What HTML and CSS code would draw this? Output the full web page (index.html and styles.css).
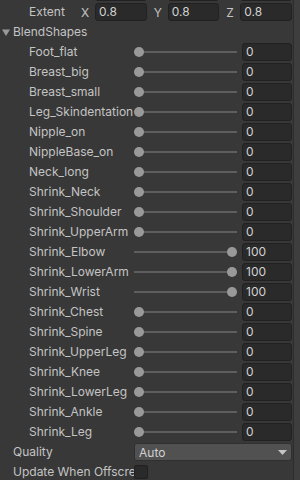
FILE: index.html
```html
<!DOCTYPE html>
<html>
<head>
<meta charset="utf-8">
<link rel="stylesheet" href="styles.css">
</head>
<body>
<div class="inspector">
  <div class="content">
    <div class="row vec indent first">
      <div class="label"></div>
      <div class="group"><span class="sub"></span><div class="field"></div></div>
      <div class="group"><span class="sub"></span><div class="field"></div></div>
      <div class="group"><span class="sub"></span><div class="field"></div></div>
    </div>
    <div class="row vec indent">
      <div class="label">Extent</div>
      <div class="group"><span class="sub">X</span><div class="field">0.8</div></div>
      <div class="group"><span class="sub">Y</span><div class="field">0.8</div></div>
      <div class="group"><span class="sub">Z</span><div class="field">0.8</div></div>
    </div>
    <div class="row fold">
      <div class="label"><svg class="tri" width="8" height="7" viewBox="0 0 8 7"><path d="M0 0.5 H8 L4 7 Z" fill="#999"/></svg>BlendShapes</div>
    </div>
    <div class="row indent"><div class="label">Foot_flat</div><div class="slider"><span class="knob"></span></div><div class="field num">0</div></div>
    <div class="row indent"><div class="label">Breast_big</div><div class="slider"><span class="knob"></span></div><div class="field num">0</div></div>
    <div class="row indent"><div class="label">Breast_small</div><div class="slider"><span class="knob"></span></div><div class="field num">0</div></div>
    <div class="row indent"><div class="label">Leg_Skindentation</div><div class="slider"><span class="knob"></span></div><div class="field num">0</div></div>
    <div class="row indent"><div class="label">Nipple_on</div><div class="slider"><span class="knob"></span></div><div class="field num">0</div></div>
    <div class="row indent"><div class="label">NippleBase_on</div><div class="slider"><span class="knob"></span></div><div class="field num">0</div></div>
    <div class="row indent"><div class="label">Neck_long</div><div class="slider"><span class="knob"></span></div><div class="field num">0</div></div>
    <div class="row indent"><div class="label">Shrink_Neck</div><div class="slider"><span class="knob"></span></div><div class="field num">0</div></div>
    <div class="row indent"><div class="label">Shrink_Shoulder</div><div class="slider"><span class="knob"></span></div><div class="field num">0</div></div>
    <div class="row indent"><div class="label">Shrink_UpperArm</div><div class="slider"><span class="knob"></span></div><div class="field num">0</div></div>
    <div class="row indent"><div class="label">Shrink_Elbow</div><div class="slider max"><span class="knob"></span></div><div class="field num">100</div></div>
    <div class="row indent"><div class="label">Shrink_LowerArm</div><div class="slider max"><span class="knob"></span></div><div class="field num">100</div></div>
    <div class="row indent"><div class="label">Shrink_Wrist</div><div class="slider max"><span class="knob"></span></div><div class="field num">100</div></div>
    <div class="row indent"><div class="label">Shrink_Chest</div><div class="slider"><span class="knob"></span></div><div class="field num">0</div></div>
    <div class="row indent"><div class="label">Shrink_Spine</div><div class="slider"><span class="knob"></span></div><div class="field num">0</div></div>
    <div class="row indent"><div class="label">Shrink_UpperLeg</div><div class="slider"><span class="knob"></span></div><div class="field num">0</div></div>
    <div class="row indent"><div class="label">Shrink_Knee</div><div class="slider"><span class="knob"></span></div><div class="field num">0</div></div>
    <div class="row indent"><div class="label">Shrink_LowerLeg</div><div class="slider"><span class="knob"></span></div><div class="field num">0</div></div>
    <div class="row indent"><div class="label">Shrink_Ankle</div><div class="slider"><span class="knob"></span></div><div class="field num">0</div></div>
    <div class="row indent"><div class="label">Shrink_Leg</div><div class="slider"><span class="knob"></span></div><div class="field num">0</div></div>
    <div class="row">
      <div class="label">Quality</div>
      <div class="dropdown"><span>Auto</span><svg width="9" height="5" viewBox="0 0 9 5"><path d="M0 0 H9 L4.5 5 Z" fill="#c4c4c4"/></svg></div>
    </div>
    <div class="row">
      <div class="label">Update When Offscreen</div>
      <div class="checkbox"></div>
    </div>
  </div>
  <div class="scrollbar"></div>
</div>
</body>
</html>
```
FILE: styles.css
```css
html, body {
  margin: 0;
  padding: 0;
}
body {
  background: #383838;
  width: 300px;
  height: 480px;
  overflow: hidden;
  font-family: Inter, "Noto Sans", sans-serif;
  font-size: 12px;
  color: #c4c4c4;
}
.inspector {
  display: flex;
  height: 480px;
}
.content {
  width: 293px;
  overflow: hidden;
}
.scrollbar {
  width: 6px;
  background: #3e3e3e;
  border-left: 1px solid #2c2c2c;
}
.row {
  display: flex;
  align-items: center;
  height: 20px;
  padding-right: 1px;
}
.row.first {
  margin-top: -18px;
}
.label {
  width: 134px;
  flex: none;
  box-sizing: border-box;
  padding-left: 13px;
  white-space: nowrap;
  overflow: hidden;
  line-height: 20px;
}
.indent .label {
  padding-left: 29px;
}
.vec {
  gap: 6px;
}
.vec .label {
  width: 74px;
}
.group {
  flex: 1;
  display: flex;
  align-items: center;
  min-width: 0;
}
.sub {
  width: 15px;
  flex: none;
  padding-left: 1px;
  box-sizing: border-box;
}
.field {
  flex: 1;
  min-width: 0;
  height: 18px;
  box-sizing: border-box;
  background: #2a2a2a;
  border: 1px solid #212121;
  border-radius: 3px;
  padding-left: 3px;
  line-height: 16px;
  color: #d2d2d2;
}
.fold .label {
  padding-left: 2px;
  display: flex;
  align-items: center;
}
.tri {
  margin-right: 3px;
}
.slider {
  width: 103px;
  flex: none;
  height: 18px;
  margin-right: 5px;
  display: flex;
  align-items: center;
  background: linear-gradient(#5e5e5e, #5e5e5e) center / 100% 2px no-repeat;
}
.slider.max {
  justify-content: flex-end;
}
.knob {
  width: 10px;
  height: 10px;
  border-radius: 50%;
  background: #999999;
}
.dropdown {
  flex: 1;
  height: 18px;
  box-sizing: border-box;
  background: #515151;
  border: 1px solid #303030;
  border-radius: 3px;
  display: flex;
  align-items: center;
  justify-content: space-between;
  padding: 0 4px 0 4px;
  color: #d2d2d2;
}
.checkbox {
  width: 14px;
  height: 14px;
  box-sizing: border-box;
  background: #2a2a2a;
  border: 1px solid #212121;
  border-radius: 2px;
}
```
